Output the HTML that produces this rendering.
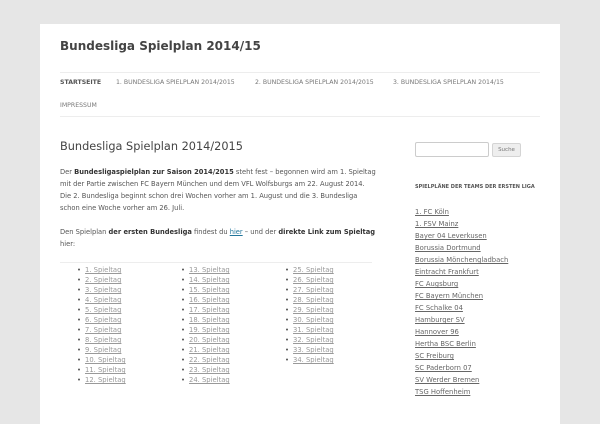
<!DOCTYPE html>
<html><head><style>
*{margin:0;padding:0;box-sizing:border-box}
body{width:600px;height:400px;overflow:hidden;background:#e6e6e6;font-family:"DejaVu Sans","Liberation Sans",sans-serif;color:#444}
.page{position:absolute;left:40px;top:24px;width:520px;height:400px;background:#fff}
.a{position:absolute;white-space:nowrap}
h1{position:absolute;left:20px;top:15px;font-size:12px;font-weight:bold;color:#444}
.hr{position:absolute;height:1px;background:#ededed}
.nav{font-size:6.2px;color:#777}
h2{position:absolute;left:20px;top:116px;font-size:11.3px;font-weight:normal;color:#444}
.p{position:absolute;left:20px;font-size:6.7px;line-height:12px;color:#555;white-space:nowrap}
b{color:#333}
ul{position:absolute;list-style:none;font-size:6.8px;line-height:10px}
ul li:before{content:"•";color:#555;margin-right:4px}
ul a{color:#999;text-decoration:underline}
.sb a{display:block;color:#666;text-decoration:underline;font-size:6.8px;line-height:12px}
</style></head><body>
<div class="page">
<h1>Bundesliga Spielplan 2014/15</h1>
<div class="hr" style="left:20px;top:48px;width:480px"></div>
<div class="a nav" style="left:20px;top:55px;font-weight:bold;color:#555">STARTSEITE</div>
<div class="a nav" style="left:76px;top:55px">1. BUNDESLIGA SPIELPLAN 2014/2015</div>
<div class="a nav" style="left:215px;top:55px">2. BUNDESLIGA SPIELPLAN 2014/2015</div>
<div class="a nav" style="left:353px;top:55px">3. BUNDESLIGA SPIELPLAN 2014/15</div>
<div class="a nav" style="left:20px;top:78px">IMPRESSUM</div>
<div class="hr" style="left:20px;top:92px;width:480px"></div>
<h2>Bundesliga Spielplan 2014/2015</h2>
<div class="p" style="top:142px">Der <b>Bundesligaspielplan zur Saison 2014/2015</b> steht fest – begonnen wird am 1. Spieltag<br>mit der Partie zwischen FC Bayern München und dem VFL Wolfsburgs am 22. August 2014.<br>Die 2. Bundesliga beginnt schon drei Wochen vorher am 1. August und die 3. Bundesliga<br>schon eine Woche vorher am 26. Juli.</div>
<div class="p" style="top:202px">Den Spielplan <b>der ersten Bundesliga</b> findest du <a style="color:#21759b;text-decoration:underline">hier</a> – und der <b>direkte Link zum Spieltag</b><br>hier:</div>
<div class="hr" style="left:20px;top:238px;width:312px"></div>
<ul style="left:37px;top:241px"><li><a>1. Spieltag</a></li><li><a>2. Spieltag</a></li><li><a>3. Spieltag</a></li><li><a>4. Spieltag</a></li><li><a>5. Spieltag</a></li><li><a>6. Spieltag</a></li><li><a>7. Spieltag</a></li><li><a>8. Spieltag</a></li><li><a>9. Spieltag</a></li><li><a>10. Spieltag</a></li><li><a>11. Spieltag</a></li><li><a>12. Spieltag</a></li></ul>
<ul style="left:141px;top:241px"><li><a>13. Spieltag</a></li><li><a>14. Spieltag</a></li><li><a>15. Spieltag</a></li><li><a>16. Spieltag</a></li><li><a>17. Spieltag</a></li><li><a>18. Spieltag</a></li><li><a>19. Spieltag</a></li><li><a>20. Spieltag</a></li><li><a>21. Spieltag</a></li><li><a>22. Spieltag</a></li><li><a>23. Spieltag</a></li><li><a>24. Spieltag</a></li></ul>
<ul style="left:245px;top:241px"><li><a>25. Spieltag</a></li><li><a>26. Spieltag</a></li><li><a>27. Spieltag</a></li><li><a>28. Spieltag</a></li><li><a>29. Spieltag</a></li><li><a>30. Spieltag</a></li><li><a>31. Spieltag</a></li><li><a>32. Spieltag</a></li><li><a>33. Spieltag</a></li><li><a>34. Spieltag</a></li></ul>
<div class="a" style="left:375px;top:118px;width:74px;height:15px;border:1px solid #ccc;border-radius:2px"></div>
<div class="a" style="left:452px;top:119px;width:29px;height:14px;border:1px solid #d4d4d4;border-radius:2px;background:#eee;font-size:5.5px;color:#777;text-align:center;line-height:12px">Suche</div>
<div class="a" style="left:375px;top:160px;font-size:5px;font-weight:bold;color:#555">SPIELPLÄNE DER TEAMS DER ERSTEN LIGA</div>
<div class="a sb" style="left:375px;top:182px">
<a>1. FC Köln</a><a>1. FSV Mainz</a><a>Bayer 04 Leverkusen</a><a>Borussia Dortmund</a><a>Borussia Mönchengladbach</a><a>Eintracht Frankfurt</a><a>FC Augsburg</a><a>FC Bayern München</a><a>FC Schalke 04</a><a>Hamburger SV</a><a>Hannover 96</a><a>Hertha BSC Berlin</a><a>SC Freiburg</a><a>SC Paderborn 07</a><a>SV Werder Bremen</a><a>TSG Hoffenheim</a>
</div>
</div>
</body></html>
